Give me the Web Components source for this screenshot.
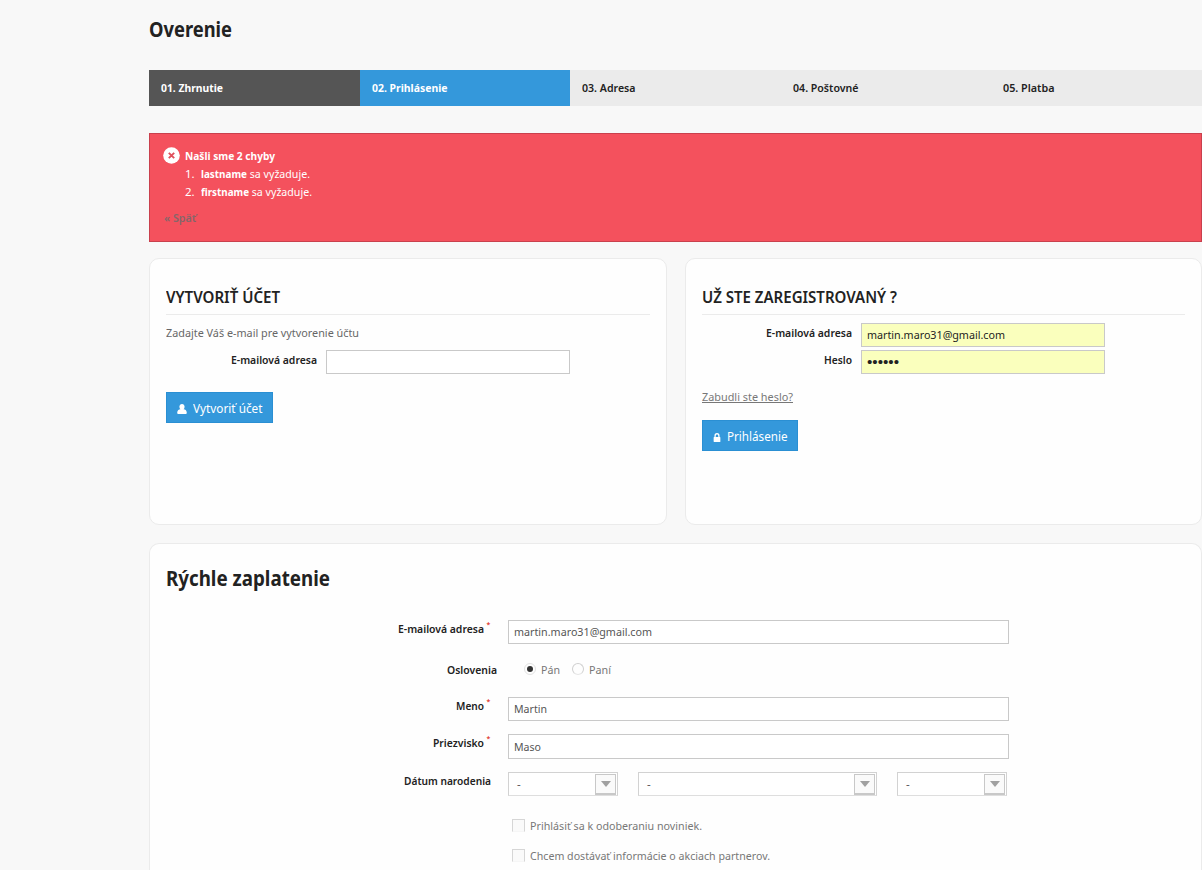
<!DOCTYPE html>
<html lang="sk">
<head>
<meta charset="utf-8">
<title>Overenie</title>
<style>
  html, body {
    margin: 0;
    height: 100%;
    overflow: hidden;
  }
  body {
    background: #f8f8f8;
    color: #222;
    font: 11.5px/18px "Noto Sans", "Open Sans", sans-serif;
  }
</style>
</head>
<body>
<shop-checkout></shop-checkout>

<script>
// Shared base: every element renders its template once
class BaseElement extends HTMLElement {
  constructor() {
    super();
    this.attachShadow({ mode: "open" });
  }

  connectedCallback() {
    if (this.shadowRoot.childNodes.length) return;
    const template = document.createElement("template");
    template.innerHTML = `<style>${this.getStyles()}</style>${this.getTemplate()}`;
    this.shadowRoot.appendChild(template.content.cloneNode(true));
    this.ready();
  }

  get(name) {
    return this.getAttribute(name) || "";
  }

  ready() {}
}

// Single line of text condensed to a given width
class FitText extends BaseElement {
  getStyles() {
    return `
      :host { display: inline-block; white-space: pre; }
      :host([bold]) { font-size: 11.2px; font-weight: 700; }
      :host([underline]) span { text-decoration: underline; }
      span { display: inline-block; transform-origin: 0 50%; }
    `;
  }
  getTemplate() {
    return `<span><slot></slot></span>`;
  }
  ready() {
    const width = parseFloat(this.get("w"));
    const span = this.shadowRoot.querySelector("span");
    const natural = span.getBoundingClientRect().width;
    if (!width || !natural) return;
    this.style.width = width + "px";
    span.style.transform = `scaleX(${width / natural})`;
  }
}
customElements.define("fit-text", FitText);

class CheckoutStep extends BaseElement {
  getStyles() {
    return `
      :host {
        flex: 1;
        box-sizing: border-box;
        height: 36px;
        padding-left: 12px;
        font-size: 11.2px;
        font-weight: 600;
        line-height: 36px;
        background: #ebebeb;
        color: #222;
      }
      :host([state="done"]) { background: #555; color: #fff; font-weight: 700; }
      :host([state="current"]) { background: #3498db; color: #fff; font-weight: 700; }
    `;
  }
  getTemplate() {
    return `<slot></slot>`;
  }
}
customElements.define("checkout-step", CheckoutStep);

class ErrorAlert extends BaseElement {
  getStyles() {
    return `
      :host {
        display: block;
        box-sizing: border-box;
        height: 109px;
        padding: 13px 13px 0;
        border: 1px solid #c9404d;
        background: #f4515d;
        color: #fff;
      }
      .row { display: flex; gap: 5px; }
      svg { width: 17px; height: 17px; }
      ol { list-style: none; margin: 0; padding: 0; }
      .back { margin: 8px 0 0 1px; color: #85666a; font-size: 11.2px; font-weight: 600; }
    `;
  }
  getTemplate() {
    return `
      <div class="row">
        <svg viewBox="0 0 17 17">
          <circle cx="8.5" cy="8.5" r="8.3" fill="#fff"/>
          <path d="M5.800 5.800l5.400 5.400M11.200 5.800l-5.400 5.400" stroke="#e0505c" stroke-width="1.900"/>
        </svg>
        <div>
          <slot name="title"></slot>
          <ol><slot></slot></ol>
        </div>
      </div>
      <div class="back"><slot name="back"></slot></div>
    `;
  }
}
customElements.define("error-alert", ErrorAlert);

class ShopCard extends BaseElement {
  getStyles() {
    return `
      :host {
        display: block;
        box-sizing: border-box;
        padding: 0 16px;
        border: 1px solid #ebebeb;
        border-radius: 10px;
        background: #fefefe;
      }
    `;
  }
  getTemplate() {
    return `<slot></slot>`;
  }
}
customElements.define("shop-card", ShopCard);

class FormRow extends BaseElement {
  getStyles() {
    return `
      :host {
        display: grid;
        grid-template-columns: var(--label-width) 1fr;
        column-gap: var(--label-gap);
        align-items: start;
      }
      .label {
        display: flex;
        justify-content: flex-end;
        padding-top: var(--label-top, 0);
        font-size: 11.2px;
        font-weight: 600;
        color: #222;
      }
      .star {
        width: 5px;
        padding-left: 2px;
        color: #e0382c;
        font-size: 7px;
        line-height: 10px;
        text-align: center;
      }
    `;
  }
  getTemplate() {
    const star = this.hasAttribute("required") ? `<span class="star">*</span>` : "";
    return `
      <div class="label"><fit-text w="${this.get("w")}">${this.get("label")}</fit-text>${star}</div>
      <slot></slot>
    `;
  }
}
customElements.define("form-row", FormRow);

class TextField extends BaseElement {
  getStyles() {
    return `
      :host {
        display: block;
        box-sizing: border-box;
        width: var(--field-width);
        height: 24px;
        padding-left: 5px;
        border: 1px solid #c9c9c9;
        background: #fff;
        color: #555;
        line-height: 21px;
      }
      :host([autofill]) { background: #faffbd; color: #222; }
    `;
  }
  getTemplate() {
    return `<slot></slot>`;
  }
}
customElements.define("text-field", TextField);

const ICONS = {
  user: `<svg viewBox="0 0 10 10" width="10" height="10"><path d="M5 0C3.500 0 2.400 1.200 2.400 2.700c0 1 .4 1.900 1 2.500C1.400 5.400.2 6.700.2 8.700c0 .8.5 1.300 1.300 1.300h7c.8 0 1.300-.5 1.300-1.300 0-2-1.200-3.300-3.200-3.500.6-.6 1-1.500 1-2.500C7.600 1.200 6.500 0 5 0z"/></svg>`,
  lock: `<svg viewBox="0 0 10 10" width="8" height="9" preserveAspectRatio="none"><path d="M1.800 4.500V3.300a3.200 3.200 0 0 1 6.400 0v1.200h.4c.4 0 .6.3.6.6v4.300c0 .4-.3.6-.6.600H1.400c-.4 0-.6-.3-.6-.6V5.100c0-.4.3-.6.6-.6zm1.600 0h3.200V3.300a1.600 1.600 0 0 0-3.200 0z"/></svg>`
};

class IconButton extends BaseElement {
  getStyles() {
    return `
      :host {
        display: inline-flex;
        box-sizing: border-box;
        align-items: center;
        height: 31px;
        padding: 2px 9px 0 9.500px;
        border: 1px solid #2a8fd3;
        background: #3498db;
        color: #fff;
        font-size: 12.6px;
      }
      svg { margin: 1px 6.500px 0 0; fill: #fff; }
    `;
  }
  getTemplate() {
    return `${ICONS[this.get("icon")]}<slot></slot>`;
  }
}
customElements.define("icon-button", IconButton);

class RadioOption extends BaseElement {
  getStyles() {
    return `
      :host { display: flex; align-items: center; gap: 5px; height: 18px; color: #777; }
      i {
        display: grid;
        place-items: center;
        box-sizing: border-box;
        width: 12px;
        height: 12px;
        border: 1px solid #d0d0d0;
        border-bottom-color: #e6e6e6;
        border-radius: 50%;
        margin-bottom: 2px;
      }
      :host([checked]) i { border-color: #e2e2e2; }
      :host([checked]) i::after {
        content: "";
        width: 6px;
        height: 6px;
        border-radius: 50%;
        background: #333;
      }
    `;
  }
  getTemplate() {
    return `<i></i><slot></slot>`;
  }
}
customElements.define("radio-option", RadioOption);

class CheckOption extends BaseElement {
  getStyles() {
    return `
      :host { display: flex; gap: 5px; height: 18px; color: #777; }
      i {
        box-sizing: border-box;
        width: 13px;
        height: 13px;
        margin-top: 2px;
        border: 1px solid #d6d6d6;
        border-bottom-color: #f6f6f6;
        background: #fafafa;
      }
    `;
  }
  getTemplate() {
    return `<i></i><slot></slot>`;
  }
}
customElements.define("check-option", CheckOption);

class DateSelect extends BaseElement {
  getStyles() {
    return `
      :host {
        display: flex;
        box-sizing: border-box;
        justify-content: space-between;
        height: 24px;
        padding: 1px 1px 0 8px;
        border: 1px solid #d2d2d2;
        border-bottom-color: #dedede;
        background: #fff;
        color: #555;
        line-height: 20px;
      }
      .arrow {
        display: grid;
        place-items: center;
        box-sizing: border-box;
        width: 21px;
        height: 21px;
        border: 1px solid #c8c8c8;
        border-bottom-width: 2px;
        background: #fafafa;
      }
      svg { width: 10px; height: 6px; fill: #a0a0a0; }
    `;
  }
  getTemplate() {
    return `
      <span>-</span>
      <span class="arrow"><svg viewBox="0 0 10 6"><path d="M0 0h10L5 6z"/></svg></span>
    `;
  }
}
customElements.define("date-select", DateSelect);

class ShopCheckout extends BaseElement {
  getStyles() {
    return `
      :host { display: block; width: 1053px; margin-left: 149px; }
      h1, h2, h3 { margin: 0; font-weight: 700; color: #222; }
      h1, h2 { font-size: 21px; line-height: 36px; }
      h1 { padding: 11px 0 23px; }
      h3 {
        height: 27px;
        padding-top: 28px;
        margin-bottom: 8px;
        border-bottom: 1px solid #ebebeb;
        font-size: 15.2px;
        line-height: 20px;
        font-weight: 600;
      }
      p { margin: 0; color: #666; }
      .steps { display: flex; margin-bottom: 27px; }
      .cards { display: grid; grid-template-columns: 518px 517px; gap: 18px; margin: 16px 0 18px; }
      .account { height: 267px; --label-width: 151px; --label-gap: 9px; --label-top: 1px; --field-width: 244px; }
      .create p { padding-top: 1px; }
      .create form-row { margin: 8px 0 18px; }
      .login { --label-width: 150px; }
      .login form-row { margin-bottom: 3px; }
      .login .forgot { margin: 14px 0 14px; color: #777; }
      .quick {
        height: 327px;
        border-bottom: 0;
        border-radius: 10px 10px 0 0;
        --label-width: 325px;
        --label-gap: 17px;
        --field-width: 501px;
      }
      h2 { padding: 16px 0 24px; }
      .gender { --label-width: 331px; --label-gap: 27px; }
      .radios { display: flex; gap: 12px; }
      .dates { display: grid; grid-template-columns: 110px 239px 110px; gap: 20px; }
      .checks { display: grid; gap: 12px; padding-left: 346px; }
      .dots { font-family: "Liberation Sans", sans-serif; font-size: 15px; }
      li { display: flex; }
      li span { width: 16px; }
    `;
  }
  getTemplate() {
    return `
      <h1><fit-text w="83">Overenie</fit-text></h1>
      <div class="steps">
        <checkout-step state="done"><fit-text w="62">01. Zhrnutie</fit-text></checkout-step>
        <checkout-step state="current"><fit-text w="75.500">02. Prihlásenie</fit-text></checkout-step>
        <checkout-step><fit-text w="53.500">03. Adresa</fit-text></checkout-step>
        <checkout-step><fit-text w="65.500">04. Poštovné</fit-text></checkout-step>
        <checkout-step><fit-text w="51.500">05. Platba</fit-text></checkout-step>
      </div>

      <error-alert>
        <fit-text slot="title" w="90" bold>Našli sme 2 chyby</fit-text>
        <li><span>1.</span><fit-text w="46" bold>lastname</fit-text><fit-text w="63"> sa vyžaduje.</fit-text></li>
        <li><span>2.</span><fit-text w="48" bold>firstname</fit-text><fit-text w="63"> sa vyžaduje.</fit-text></li>
        <fit-text slot="back" w="32">« Späť</fit-text>
      </error-alert>

      <div class="cards">
        <shop-card class="account create">
          <h3><fit-text w="114">VYTVORIŤ ÚČET</fit-text></h3>
          <p><fit-text w="193">Zadajte Váš e-mail pre vytvorenie účtu</fit-text></p>
          <form-row label="E-mailová adresa" w="86"><text-field></text-field></form-row>
          <icon-button icon="user"><fit-text w="69.500">Vytvoriť účet</fit-text></icon-button>
        </shop-card>
        <shop-card class="account login">
          <h3><fit-text w="195">UŽ STE ZAREGISTROVANÝ ?</fit-text></h3>
          <form-row label="E-mailová adresa" w="86"><text-field autofill><fit-text w="138">martin.maro31@gmail.com</fit-text></text-field></form-row>
          <form-row label="Heslo" w="28"><text-field autofill><fit-text class="dots" w="32">••••••</fit-text></text-field></form-row>
          <p class="forgot"><fit-text w="91" underline>Zabudli ste heslo?</fit-text></p>
          <icon-button icon="lock"><fit-text w="60.500">Prihlásenie</fit-text></icon-button>
        </shop-card>
      </div>

      <shop-card class="quick">
        <h2><fit-text w="164">Rýchle zaplatenie</fit-text></h2>
        <form-row label="E-mailová adresa" w="86" required style="height:41px"><text-field><fit-text w="138">martin.maro31@gmail.com</fit-text></text-field></form-row>
        <form-row class="gender" label="Oslovenia" w="50" style="height:36px">
          <div class="radios">
            <radio-option checked><fit-text w="19">Pán</fit-text></radio-option>
            <radio-option><fit-text w="22">Paní</fit-text></radio-option>
          </div>
        </form-row>
        <form-row label="Meno" w="28" required style="height:37px"><text-field><fit-text w="33">Martin</fit-text></text-field></form-row>
        <form-row label="Priezvisko" w="51" required style="height:38px"><text-field style="height:25px;line-height:23px"><fit-text w="27">Maso</fit-text></text-field></form-row>
        <form-row label="Dátum narodenia" w="87" style="height:45px">
          <div class="dates">
            <date-select></date-select>
            <date-select></date-select>
            <date-select></date-select>
          </div>
        </form-row>
        <div class="checks">
          <check-option><fit-text w="172">Prihlásiť sa k odoberaniu noviniek.</fit-text></check-option>
          <check-option><fit-text w="240">Chcem dostávať informácie o akciach partnerov.</fit-text></check-option>
        </div>
      </shop-card>
    `;
  }
}
customElements.define("shop-checkout", ShopCheckout);
</script>
</body>
</html>
